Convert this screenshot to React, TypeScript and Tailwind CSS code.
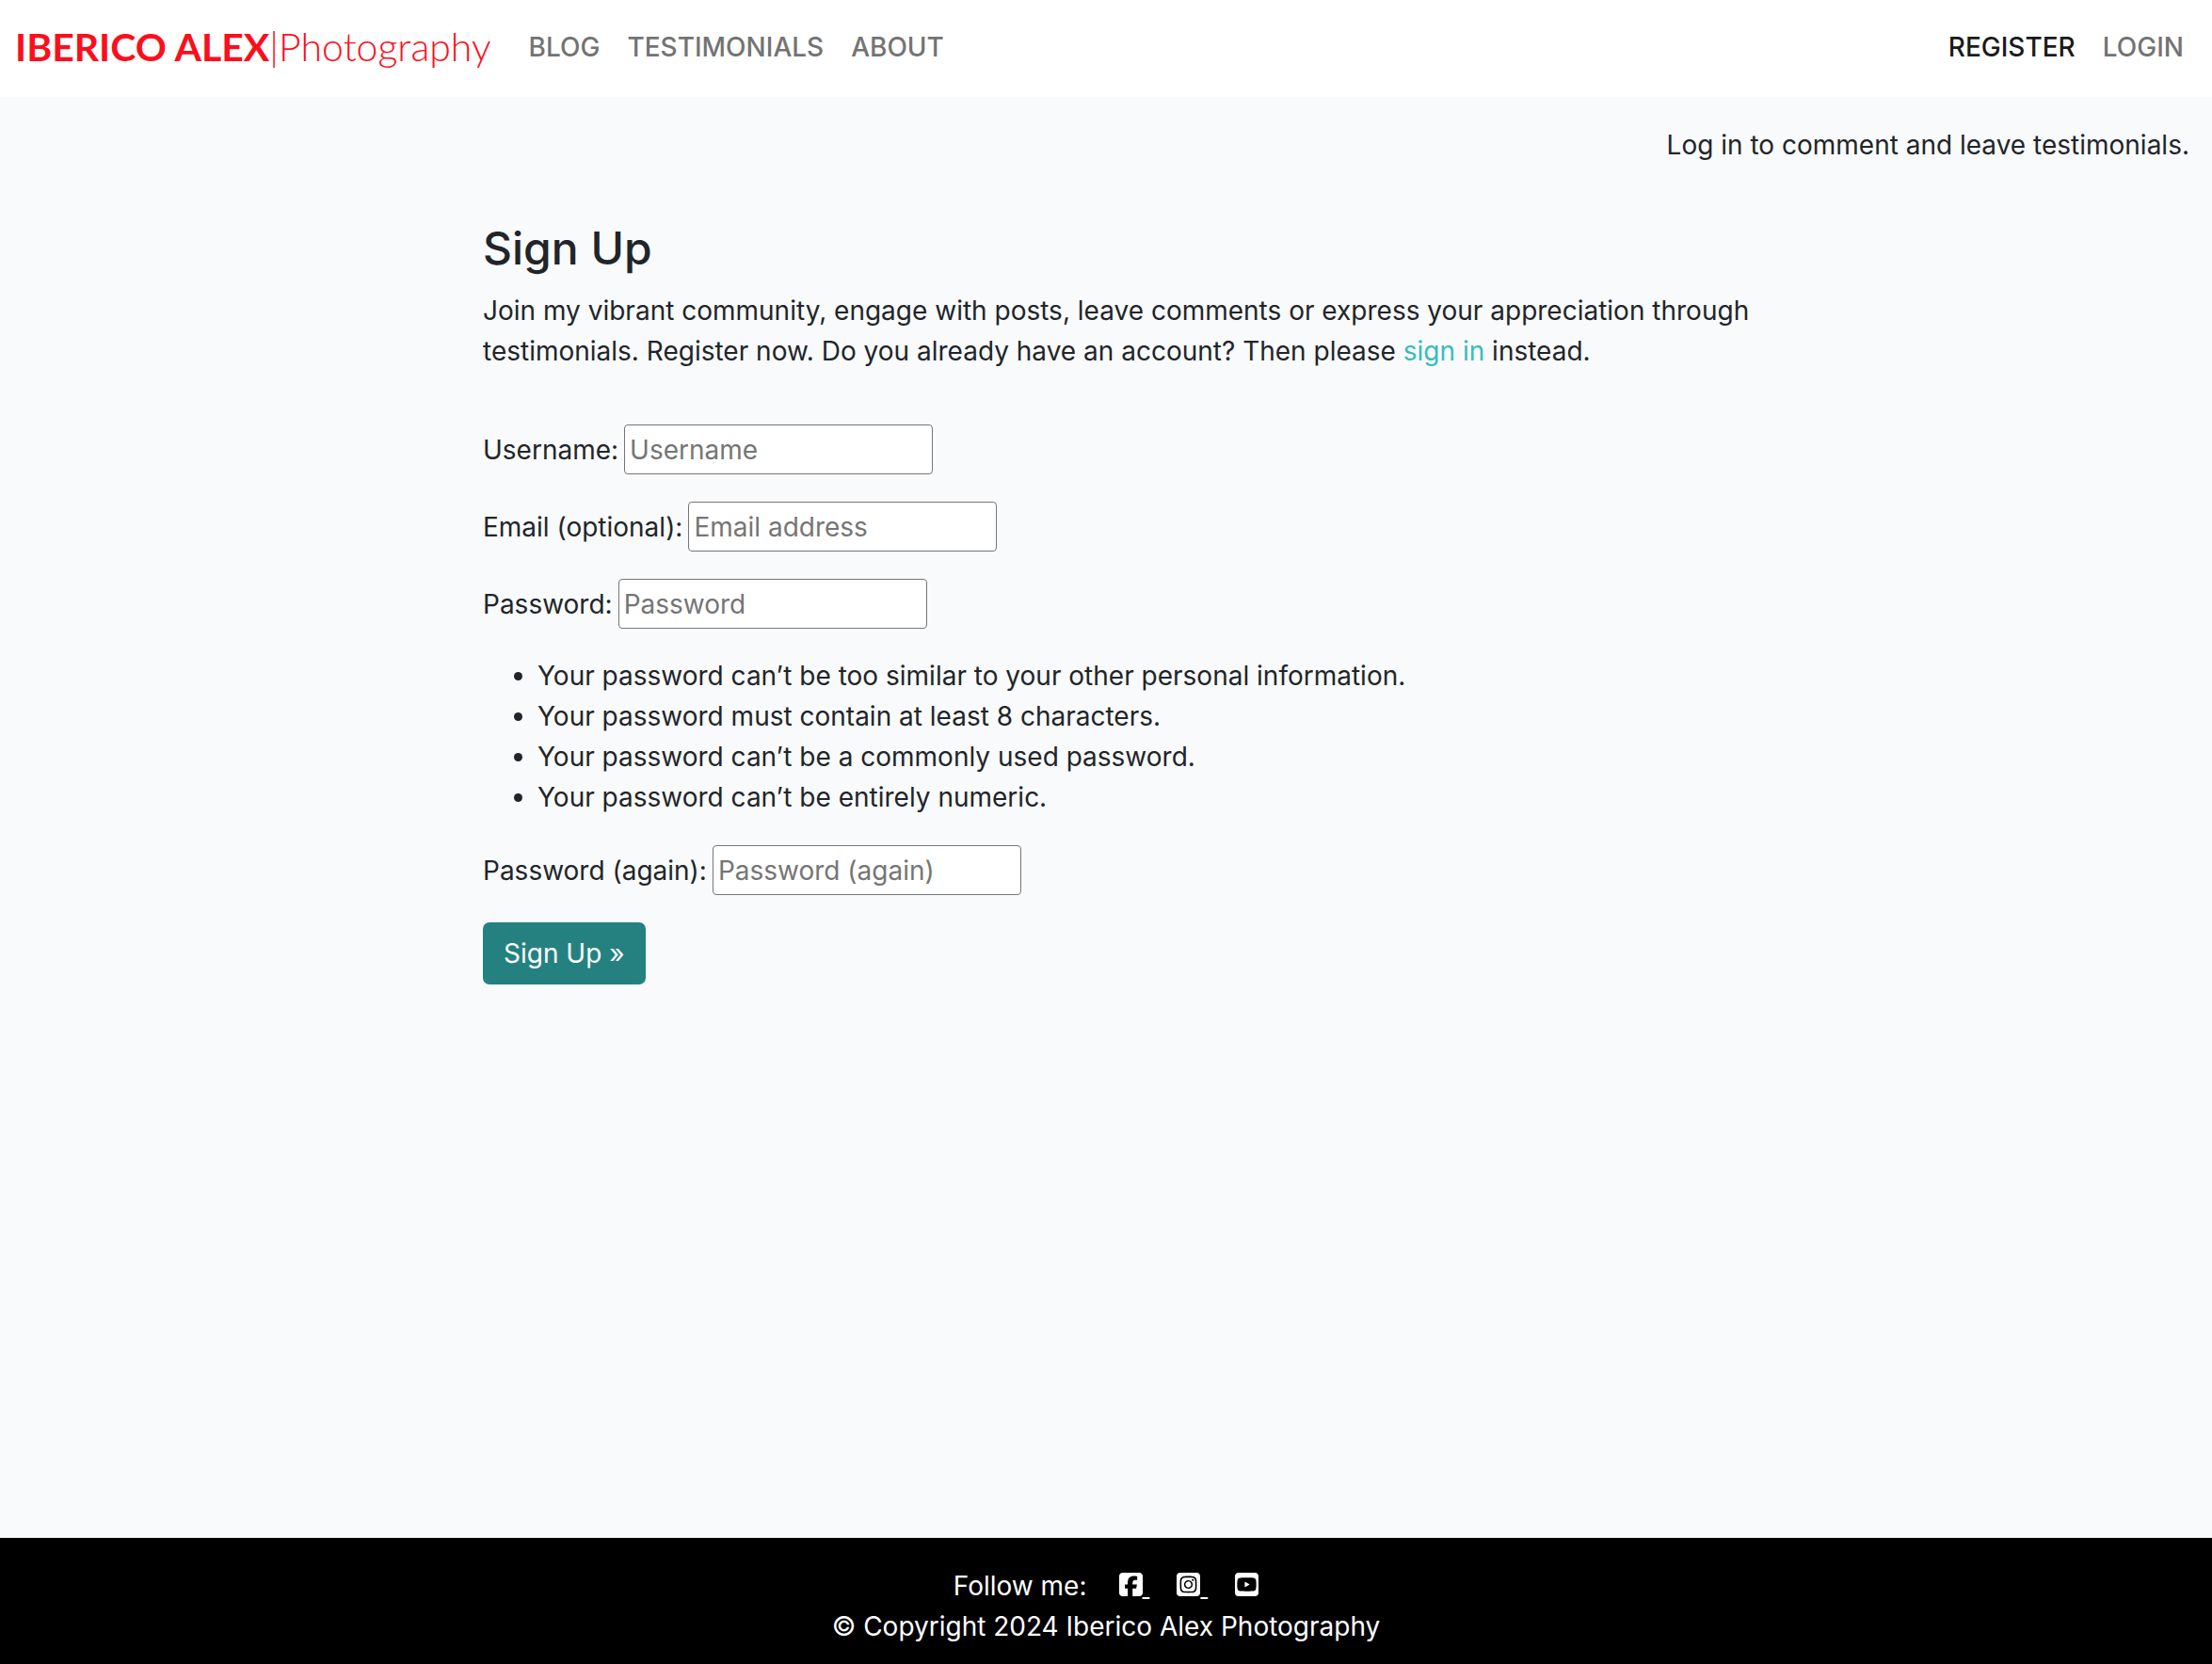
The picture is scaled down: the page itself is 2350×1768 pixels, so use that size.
import { FaSquareFacebook, FaSquareInstagram, FaSquareYoutube } from "react-icons/fa6";

const passwordRules = [
  "Your password can’t be too similar to your other personal information.",
  "Your password must contain at least 8 characters.",
  "Your password can’t be a commonly used password.",
  "Your password can’t be entirely numeric.",
];

type FieldProps = {
  id: string;
  label: string;
  type: string;
  placeholder: string;
};

function Field({ id, label, type, placeholder }: FieldProps) {
  return (
    <div className="flex items-baseline gap-[6px]">
      <label htmlFor={id}>{label}</label>
      <input
        id={id}
        name={id}
        type={type}
        placeholder={placeholder}
        className="h-[53px] w-[328px] rounded-[4px] border border-[#767676] bg-white px-[5px] placeholder:text-[#757575]"
      />
    </div>
  );
}

function Header() {
  return (
    <header className="flex items-center bg-white pt-4 pr-[30px] pb-5 pl-4">
      <a
        href="#home"
        className="mr-10 font-[Lato,sans-serif] text-[41px] leading-[67px] whitespace-nowrap text-[#fb0f1c]"
      >
        <span className="font-bold">IBERICO ALEX</span>
        <span className="font-light">|Photography</span>
      </a>
      <nav className="flex flex-1 items-center justify-between pt-[2px] font-medium text-[#737373]">
        <div className="flex gap-[29px]">
          <a href="#blog">BLOG</a>
          <a href="#testimonials">TESTIMONIALS</a>
          <a href="#about">ABOUT</a>
        </div>
        <div className="flex gap-[29px]">
          <a href="#register" aria-current="page" className="text-[#1a1a1a]">
            REGISTER
          </a>
          <a href="#login">LOGIN</a>
        </div>
      </nav>
    </header>
  );
}

function SignUp() {
  return (
    <section className="mx-auto mt-[58px] w-full max-w-[1324px]">
      <h1 className="text-[48px] leading-[60px] font-medium">Sign Up</h1>
      <div className="mt-[15px] -mr-6">
        <p>
          Join my vibrant community, engage with posts, leave comments or express your appreciation through
          testimonials. Register now. Do you already have an account? Then please{" "}
          <a href="#signin" className="text-[#37bdbb]">
            sign in
          </a>{" "}
          instead.
        </p>
      </div>
      <form className="mt-14 flex flex-col items-start gap-[29px]">
        <Field id="username" label="Username:" type="text" placeholder="Username" />
        <Field id="email" label="Email (optional):" type="email" placeholder="Email address" />
        <Field id="password" label="Password:" type="password" placeholder="Password" />
        <ul className="list-disc pl-[58px]">
          {passwordRules.map((rule) => (
            <li key={rule}>{rule}</li>
          ))}
        </ul>
        <Field id="password-again" label="Password (again):" type="password" placeholder="Password (again)" />
        <button type="submit" className="rounded-[7px] bg-[#258180] px-[22px] pt-3 pb-[11px] text-white">
          Sign Up »
        </button>
      </form>
    </section>
  );
}

function Footer() {
  return (
    <footer className="bg-black pt-[30px] pb-[18px] text-center text-white">
      <div className="flex justify-center">
        <span className="mr-[34px]">Follow me:</span>
        <a href="#facebook" aria-label="Facebook" className="mr-[29px] flex underline">
          <FaSquareFacebook className="mt-[5px] h-[29px] w-[25px]" />
          &nbsp;
        </a>
        <a href="#instagram" aria-label="Instagram" className="mr-[29px] flex underline">
          <FaSquareInstagram className="mt-[5px] h-[29px] w-[25px]" />
          &nbsp;
        </a>
        <a href="#youtube" aria-label="YouTube" className="flex">
          <FaSquareYoutube className="mt-[5px] h-[29px] w-[25px]" />
        </a>
      </div>
      <p>© Copyright 2024 Iberico Alex Photography</p>
    </footer>
  );
}

export default function App() {
  return (
    <div className="flex min-h-screen flex-col bg-[#f9fafc] font-[Inter,sans-serif] text-[28px] leading-[43px] text-[#212529]">
      <Header />
      <main className="flex flex-1 flex-col">
        <p className="mt-[30px] px-6 text-right">Log in to comment and leave testimonials.</p>
        <SignUp />
      </main>
      <Footer />
    </div>
  );
}
